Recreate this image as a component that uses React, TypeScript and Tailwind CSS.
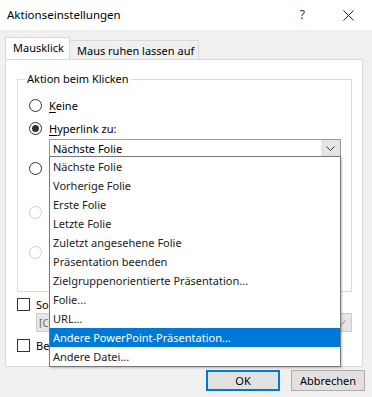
import React from 'react';

const listItems = [
  'Nächste Folie',
  'Vorherige Folie',
  'Erste Folie',
  'Letzte Folie',
  'Zuletzt angesehene Folie',
  'Präsentation beenden',
  'Zielgruppenorientierte Präsentation...',
  'Folie...',
  'URL...',
  'Andere PowerPoint-Präsentation...',
  'Andere Datei...',
];

function Radio({ checked, disabled }: { checked?: boolean; disabled?: boolean }) {
  return (
    <span
      className={`flex h-[13px] w-[13px] shrink-0 items-center justify-center rounded-full border bg-white ${
        disabled ? 'border-[#cccccc]' : 'border-[#333333]'
      }`}
    >
      {checked && <span className="h-[7px] w-[7px] rounded-full bg-[#333333]" />}
    </span>
  );
}

function Checkbox() {
  return <span className="h-[13px] w-[13px] shrink-0 border border-[#333333] bg-white" />;
}

function Chevron({ color = '#333333' }: { color?: string }) {
  return (
    <svg width="9" height="5" viewBox="0 0 9 5" fill="none">
      <path d="M0.5 0.5 L4.5 4.5 L8.5 0.5" stroke={color} strokeWidth="1" />
    </svg>
  );
}

export default function App() {
  return (
    <div className="relative h-[397px] w-[372px] overflow-hidden bg-[#f0f0f0] font-['Noto_Sans',sans-serif] text-[11px] leading-none whitespace-nowrap text-black">
      {/* Title bar */}
      <div className="flex h-[30px] items-center bg-white pl-[7px] text-[11.5px]">
        <span>Aktionseinstellungen</span>
        <span className="ml-auto mr-[38px] text-[12px] text-[#333333]">?</span>
        <svg className="mr-[18px]" width="11" height="11" viewBox="0 0 11 11">
          <path d="M0.5 0.5 L10.5 10.5 M10.5 0.5 L0.5 10.5" stroke="#222222" strokeWidth="1" />
        </svg>
      </div>

      {/* Tabs */}
      <div className="mt-[7px] flex px-[5px]">
        <div className="relative z-10 -mb-px flex h-[22px] w-[65px] items-center border border-b-0 border-[#d9d9d9] bg-white pl-[7px] pb-[2px]">
          Mausklick
        </div>
        <div className="mt-[3px] flex h-[19px] w-[129px] items-center border border-b-0 border-l-0 border-[#d9d9d9] bg-[#f0f0f0] pl-[7px] pt-[1px]">
          Maus ruhen lassen auf
        </div>
      </div>

      {/* Tab panel */}
      <div className="mx-[5px] h-[308px] w-[358px] border border-[#d9d9d9] bg-white px-[11px] pt-[19px]">
        <div className="relative flex h-[213px] w-[335px] flex-col border border-[#dcdcdc]">
          <span className="absolute left-[7px] top-[-7px] bg-white px-[2px]">Aktion beim Klicken</span>

          <div className="mt-[16px] flex h-[18px] items-center gap-[7px] pl-[11px]">
            <Radio />
            <span>
              <span className="underline underline-offset-2">K</span>eine
            </span>
          </div>
          <div className="mt-[5px] flex h-[18px] items-center gap-[7px] pl-[11px]">
            <Radio checked />
            <span>
              <span className="underline underline-offset-2">H</span>yperlink zu:
            </span>
          </div>

          <div className="ml-[31px] mt-[2px] flex h-[18px] w-[292px] items-center border border-[#9a9a9a] bg-white">
            <span className="pl-[3px]">Nächste Folie</span>
            <span className="ml-auto flex h-full w-[19px] items-center justify-center bg-[#e5e5e5]">
              <Chevron />
            </span>
          </div>

          {/* radios hidden under the open list */}
          <div className="mt-[2px] flex h-[18px] items-center pl-[11px]">
            <Radio />
          </div>
          <div className="mt-[26px] flex h-[18px] items-center pl-[11px]">
            <Radio disabled />
          </div>
          <div className="mt-[22px] flex h-[18px] items-center pl-[11px]">
            <Radio disabled />
          </div>
        </div>

        <div className="mt-[6px] flex items-center gap-[6px]">
          <Checkbox />
          <span className="w-[13px] overflow-hidden">Sound wiedergeben:</span>
        </div>
        <div className="ml-[19px] mt-[2px] flex h-[19px] w-[316px] items-center border border-[#cccccc] bg-[#e6e6e6] text-[#6d6d6d]">
          <span className="w-[11px] overflow-hidden pl-[2px]">[Ohne Sound]</span>
          <span className="ml-auto mr-[5px]">
            <Chevron color="#8a8a8a" />
          </span>
        </div>
        <div className="mt-[7px] flex items-center gap-[6px]">
          <Checkbox />
          <span className="w-[13px] overflow-hidden">
            <span className="underline underline-offset-2">B</span>eim Klicken markieren
          </span>
        </div>
      </div>

      {/* Buttons */}
      <div className="mt-[3px] flex justify-end gap-[11px] pr-[7px]">
        <button className="flex h-[21px] w-[74px] items-center justify-center border-2 border-[#0078d7] bg-[#e1e1e1]">
          OK
        </button>
        <button className="flex h-[21px] w-[74px] items-center justify-center border border-[#adadad] bg-[#e1e1e1]">
          Abbrechen
        </button>
      </div>

      {/* Open dropdown list */}
      <div className="absolute left-[49px] top-[156px] z-20 w-[292px] border border-[#7a7a7a] bg-white shadow-[1px_1px_2px_rgba(0,0,0,0.25)]">
        {listItems.map((item, i) => (
          <div
            key={item}
            className={`flex h-[19px] items-center pl-[3px] ${
              i === 9 ? 'bg-[#0078d7] text-white' : 'text-[#222222]'
            }`}
          >
            {item}
          </div>
        ))}
      </div>
    </div>
  );
}
